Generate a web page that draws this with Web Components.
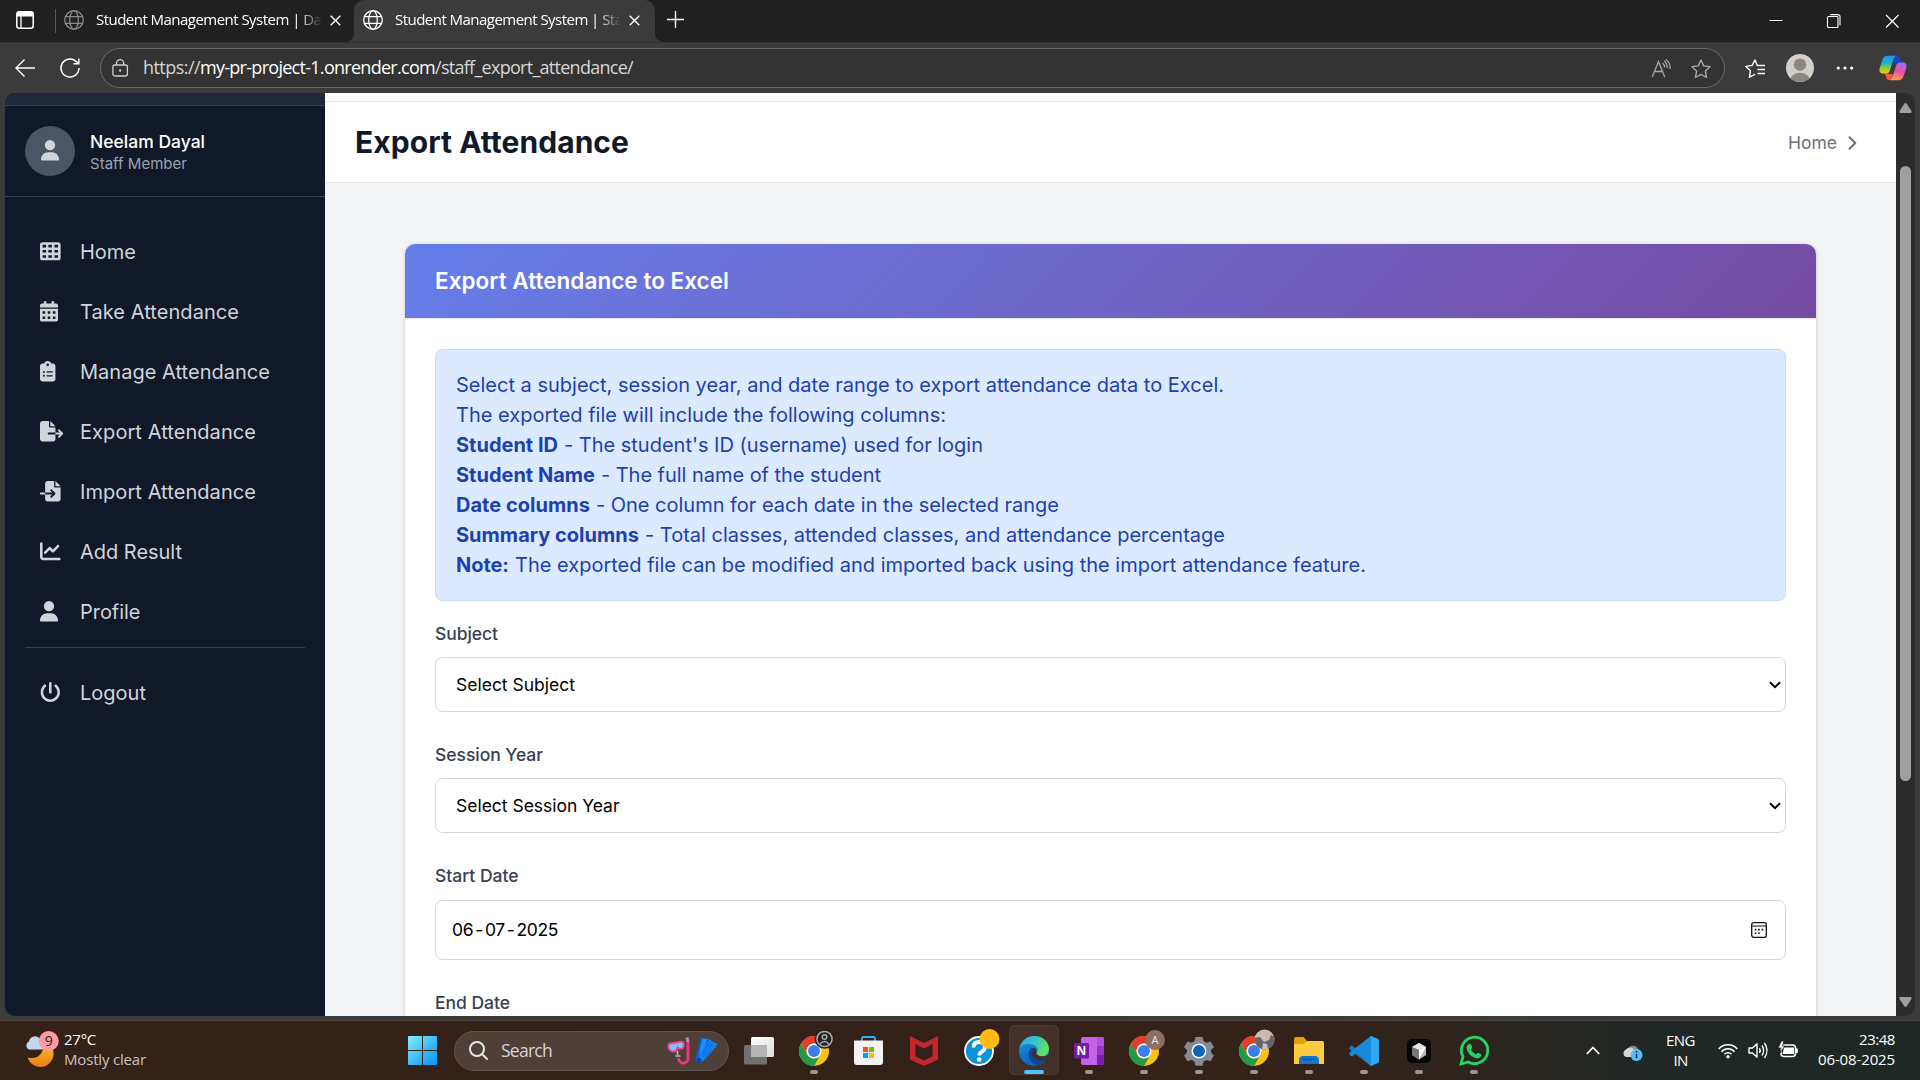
<!DOCTYPE html>
<html lang="en">
<head>
<meta charset="utf-8">
<title>Student Management System | Staff</title>
<style>
html,body{margin:0;height:100%;overflow:hidden;background:#3b3b3b}
desktop-screen{font-family:Inter,"Liberation Sans",sans-serif}
</style>
</head>
<body>
<desktop-screen></desktop-screen>
<script>
function define(name, css, html, setup) {
  const t = document.createElement('template');
  t.innerHTML = `<style>*{box-sizing:border-box}svg{display:block;overflow:visible}${css}</style>${html}`;
  customElements.define(name, class extends HTMLElement {
    constructor() {
      super();
      this.attachShadow({ mode: 'open' }).append(t.content.cloneNode(true));
    }
    connectedCallback() { if (setup) setup(this, this.shadowRoot); }
  });
}
const UI = '"Open Sans","Noto Sans",sans-serif';

/* Text run whose tracking is adjusted to a given advance width. */
define('fit-text', ':host{display:block;white-space:nowrap}span{display:inline-block}', '<span><slot></slot></span>', (el, root) => {
  const s = root.querySelector('span');
  const w = parseFloat(el.getAttribute('w'));
  const n = el.textContent.length;
  const now = s.getBoundingClientRect().width;
  if (now && w) { s.style.letterSpacing = ((w - now) / n) + 'px'; el.style.width = w + 'px'; }
});

/* ---------- glyph icons of the site ---------- */
const squares = (xs, ys, s, h = s) => ys.map(y => xs.map(x => `M${x} ${y}h${s}v${h}h-${s}z`).join('')).join('');
const GLYPHS = {
  table: [512, 'M64 32H448a64 64 0 0 1 64 64V416a64 64 0 0 1-64 64H64a64 64 0 0 1-64-64V96A64 64 0 0 1 64 32z' + squares([64, 208, 360], [96, 224, 352], 88, 64)],
  calendar: [448, 'M128 0c17.7 0 32 14.3 32 32V64H288V32c0-17.7 14.3-32 32-32s32 14.3 32 32V64h48c26.5 0 48 21.5 48 48v48H0V112C0 85.5 21.5 64 48 64H96V32c0-17.7 14.3-32 32-32zM0 192H448V464c0 26.5-21.5 48-48 48H48c-26.5 0-48-21.5-48-48V192z' + squares([64, 192, 320], [256, 384], 64)],
  clipboard: [384, 'M192 0c-41.8 0-77.4 26.7-90.5 64H64C28.7 64 0 92.7 0 128V448c0 35.3 28.7 64 64 64H320c35.3 0 64-28.7 64-64V128c0-35.3-28.7-64-64-64H282.5C269.4 26.7 233.8 0 192 0zm0 64a32 32 0 1 1 0 64 32 32 0 1 1 0-64zM72 272a24 24 0 1 1 48 0 24 24 0 1 1 -48 0zm104-16H304c8.800 0 16 7.200 16 16s-7.200 16-16 16H176c-8.800 0-16-7.200-16-16s7.200-16 16-16zM72 368a24 24 0 1 1 48 0 24 24 0 1 1 -48 0zm88 0c0-8.800 7.200-16 16-16H304c8.800 0 16 7.200 16 16s-7.200 16-16 16H176c-8.800 0-16-7.200-16-16z'],
  export: [576, 'M0 64C0 28.7 28.7 0 64 0H224V128c0 17.7 14.3 32 32 32H384V288H216c-13.3 0-24 10.7-24 24s10.7 24 24 24H384V448c0 35.3-28.7 64-64 64H64c-35.3 0-64-28.7-64-64V64zM384 336V288H494.1l-39-39c-9.4-9.4-9.4-24.6 0-33.9s24.6-9.4 33.9 0l80 80c9.4 9.4 9.4 24.6 0 33.9l-80 80c-9.4 9.4-24.6 9.4-33.9 0s-9.4-24.6 0-33.9l39-39H384zm0-208H256V0L384 128z'],
  import: [512, 'M128 64c0-35.3 28.7-64 64-64H352V128c0 17.7 14.3 32 32 32H512V448c0 35.3-28.7 64-64 64H192c-35.3 0-64-28.7-64-64V336H302.1l-39 39c-9.4 9.4-9.4 24.6 0 33.9s24.6 9.4 33.9 0l80-80c9.4-9.4 9.4-24.6 0-33.9l-80-80c-9.4-9.4-24.6-9.4-33.9 0s-9.4 24.6 0 33.9l39 39H128V64zm0 224v48H24c-13.3 0-24-10.7-24-24s10.7-24 24-24H128zM512 128H384V0L512 128z'],
  chart: [512, 'M64 64c0-17.7-14.3-32-32-32S0 46.3 0 64V400c0 44.2 35.8 80 80 80H480c17.7 0 32-14.3 32-32s-14.3-32-32-32H80c-8.8 0-16-7.2-16-16V64zm406.6 86.6c12.5-12.5 12.5-32.8 0-45.3s-32.8-12.5-45.3 0L320 210.7l-57.4-57.4c-12.5-12.5-32.8-12.5-45.3 0l-112 112c-12.5 12.5-12.5 32.8 0 45.3s32.8 12.5 45.3 0L240 221.3l57.4 57.4c12.5 12.5 32.8 12.5 45.3 0l128-128z'],
  user: [448, 'M224 256A128 128 0 1 0 224 0a128 128 0 1 0 0 256zm-45.7 48C79.8 304 0 383.8 0 482.3C0 498.7 13.3 512 29.7 512H418.3c16.4 0 29.7-13.3 29.7-29.7C448 383.8 368.2 304 269.7 304H178.3z'],
  power: [512, 'M288 32c0-17.7-14.3-32-32-32s-32 14.3-32 32V256c0 17.7 14.3 32 32 32s32-14.3 32-32V32zM143.5 120.6c13.6-11.3 15.4-31.5 4.1-45.1s-31.5-15.4-45.1-4.1C49.7 115.4 16 181.8 16 256c0 132.5 107.5 240 240 240s240-107.5 240-240c0-74.2-33.8-140.6-86.6-184.6c-13.6-11.3-33.8-9.4-45.1 4.1s-9.4 33.8 4.1 45.1c38.9 32.3 63.5 81 63.5 135.4c0 97.2-78.8 176-176 176s-176-78.8-176-176c0-54.4 24.7-103.1 63.5-135.4z']
};
define('glyph-icon', ':host{display:block}', '<svg height="20.6" fill="currentColor"><path fill-rule="evenodd"/></svg>', (el, root) => {
  const [w, d] = GLYPHS[el.getAttribute('name')];
  const svg = root.querySelector('svg');
  svg.setAttribute('viewBox', `0 0 ${w} 512`);
  svg.setAttribute('width', w / 512 * 20.6);
  root.querySelector('path').setAttribute('d', d);
});

/* ---------- browser chrome ---------- */
const GLOBE = '<svg width="20" height="20" viewBox="0 0 20 20" fill="none" stroke="currentColor" stroke-width="1.3"><circle cx="10" cy="10" r="9.3"/><ellipse cx="10" cy="10" rx="4.3" ry="9.3"/><path d="M1.5 6.7h17M1.5 13.3h17"/></svg>';
define('browser-tab', `:host{display:flex;align-items:center;height:42px;padding:0 0 2px;color:#fff;font:15px/20px ${UI}}
.g{width:20px;margin-right:12px;color:var(--globe,#fff)}
.t{width:225px;margin-top:-2px;overflow:hidden;-webkit-mask:linear-gradient(90deg,#000 202px,transparent 226px);mask:linear-gradient(90deg,#000 202px,transparent 226px)}
.x{margin-left:9px}`,
`<div class="g">${GLOBE}</div><div class="t"><slot></slot></div><svg class="x" width="11" height="11" viewBox="0 0 11 11" stroke="#fff" stroke-width="1.4"><path d="M.7.7l9.6 9.6M10.3.7L.7 10.3"/></svg>`);

define('tab-strip', `:host{display:flex;height:42px;background:#202020;align-items:stretch}
.menu{width:55px;padding:11px 0 0 16px}.sep{width:1px;height:24px;margin:9px 8px 0 0;background:#5a5a5a}
browser-tab.a{--globe:#8a8a8a;width:290px}
.on{width:301px;background:#3b3b3b;border-radius:10px 10px 0 0;padding-left:9px;display:flex;position:relative}
.on:before,.on:after{content:"";position:absolute;bottom:0;width:8px;height:8px}
.on:before{left:-8px;background:radial-gradient(circle at 0 0,#202020 7.5px,#3b3b3b 8px)}
.on:after{right:-8px;background:radial-gradient(circle at 100% 0,#202020 7.5px,#3b3b3b 8px)}
.plus{padding:11px 0 0 12px;flex:1}.win{display:flex;padding:14px 21.500px 0 0;gap:44px}`,
`<div class="menu"><svg width="18" height="18" viewBox="0 0 18 18"><rect x=".8" y=".8" width="16.4" height="16.4" rx="2.5" fill="none" stroke="#fff" stroke-width="1.5"/><path d="M1 3a2 2 0 0 1 2-2h12a2 2 0 0 1 2 2v2.400H1z" fill="#fff"/><path d="M5 5v12" stroke="#fff" stroke-width="1.300"/></svg></div><div class="sep"></div>
<browser-tab class="a"><fit-text w="232">Student Management System | Das</fit-text></browser-tab>
<div class="on"><browser-tab><fit-text w="232">Student Management System | Staf</fit-text></browser-tab></div>
<div class="plus"><svg width="17" height="17" viewBox="0 0 17 17" stroke="#fff" stroke-width="1.400"><path d="M8.500 0v17M0 8.500h17"/></svg></div>
<div class="win"><svg width="14" height="14" viewBox="0 0 14 14" stroke="#fff" stroke-width="1"><path d="M.5 6.500h13"/></svg><svg width="14" height="14" viewBox="0 0 14 14" fill="none" stroke="#fff" stroke-width="1.100"><rect x=".5" y="2.500" width="10.500" height="11" rx="1"/><path d="M3.200 .6H11a2 2 0 0 1 2 2v8.700"/></svg><svg width="14" height="14" viewBox="0 0 14 14" stroke="#fff" stroke-width="1.200"><path d="M1 1l12.500 12.500M13.500 1L1 13.500"/></svg></div>`);

const STAR = 'M10 1l2.750 5.900 6.300.800-4.650 4.400 1.200 6.400L10 15.400 4.400 18.500l1.200-6.400L.950 7.700l6.300-.8z';
define('address-bar', `:host{display:flex;height:51px;background:#3b3b3b;align-items:center;padding:0 13px 0 15px;border-top:1px solid #303030}
.back{width:45px}.re{width:40px}
.pill{width:1625px;height:40px;border:1px solid #6c6c6c;border-radius:20px;background:#333;display:flex;align-items:center;padding:0 13px 0 11px}
.lock{width:31px}.url{flex:1;display:flex;font:18px/24px ${UI};color:#d6d6d6;margin-top:-2px}.url b{font-weight:400;color:#fff}
.ra{margin-right:20px}.r{display:flex;align-items:center;flex:1;padding-left:20px}`,
`<svg class="back" width="45" height="20" viewBox="0 0 45 20" fill="none" stroke="#fff" stroke-width="1.400"><path d="M20 10H1M9.500 1.500L1 10l8.500 8.500"/></svg>
<svg class="re" width="40" height="20" viewBox="0 0 40 20" fill="none" stroke="#fff" stroke-width="1.500"><path d="M19 10a9 9 0 1 1-3.200-6.900L18.500 5.500M18.800 .5v5.300H13.500"/></svg>
<div class="pill"><svg class="lock" width="31" height="18" viewBox="0 0 31 18" fill="none" stroke="#d0d0d0" stroke-width="1.300"><rect x=".9" y="6" width="14.500" height="11" rx="2"/><path d="M4.500 6V4.200a3.600 3.600 0 0 1 7.200 0V6"/><circle cx="8.100" cy="11.500" r=".6"/></svg>
<div class="url"><fit-text w="57">https://</fit-text><b><fit-text w="235">my-pr-project-1.onrender.com</fit-text></b><fit-text w="198">/staff_export_attendance/</fit-text></div>
<svg class="ra" width="20" height="19" viewBox="0 0 20 19" fill="none" stroke="#a8a8a8" stroke-width="1.300"><path d="M1.300 18L7.500 2.500 13.700 18M3.500 12.500h8M11.500 4a5 5 0 0 1 2 4.500M13 1.800a7.500 7.500 0 0 1 3 7.200M14.800.5a9.500 9.500 0 0 1 4.200 9.500"/></svg>
<svg width="20" height="19" viewBox="0 0 20 19" fill="none" stroke="#a8a8a8" stroke-width="1.400" stroke-linejoin="round"><path d="${STAR}"/></svg></div>
<div class="r"><svg width="20" height="19" viewBox="0 0 20 19" fill="none" stroke="#fff" stroke-width="1.400" stroke-linejoin="round"><path d="M13.500 6.500H12.300L10 1 7.200 6.400.9 7.400l4.500 4.400-1 6.400 5.600-2.900M12.500 6.500h7.500M12.500 10.500h7.500M12.500 14.500h7.500" /></svg>
<svg style="margin-left:21px" width="28" height="28" viewBox="0 0 28 28"><defs><clipPath id="c"><circle cx="14" cy="14" r="14"/></clipPath></defs><circle cx="14" cy="14" r="14" fill="#d2cfcb"/><circle cx="14" cy="10.700" r="6.200" fill="#8c8783"/><ellipse cx="14" cy="26.500" rx="10" ry="7.700" fill="#8c8783" clip-path="url(#c)"/></svg>
<svg style="margin-left:22px" width="18" height="4" viewBox="0 0 18 4" fill="#fff"><circle cx="2.300" cy="2" r="1.600"/><circle cx="9" cy="2" r="1.600"/><circle cx="15.700" cy="2" r="1.600"/></svg>
<svg style="margin-left:25px" width="28" height="26" viewBox="0 0 28 26"><defs><linearGradient id="a" x2="0" y2="1"><stop stop-color="#1a9cf0"/><stop offset=".4" stop-color="#22b0c8"/><stop offset=".7" stop-color="#8ecb3e"/><stop offset="1" stop-color="#ffc60a"/></linearGradient><linearGradient id="b" x1=".6" x2=".3" y2="1"><stop stop-color="#a06bf5"/><stop offset=".5" stop-color="#f0509a"/><stop offset="1" stop-color="#ffa352"/></linearGradient></defs>
<path d="M14 1h4.500c2 0 2.300 1.500 2.800 3.300.4 1.700 1 2.700 3 2.700l-6 1.500-4.500-1z" fill="#1546c8"/><path d="M8 18.500l6 1-1.200 5.500H10c-2 0-2.500-1.500-3-3.300C6.600 20 6 18.500 4 18.500z" fill="#fa5a3c"/>
<path d="M8.500.8H18c-2.200 0-3.200 2-3.800 4l-3 9.700c-.7 2.400-1.700 4-4.500 4H4C.8 18.500 0 16 .7 13L3.500 4.700C4.400 2 6 .8 8.500.8z" fill="url(#a)"/><path d="M19.500 25.200H10c2.200 0 3.200-2 3.800-4l3-9.700c.7-2.400 1.700-4 4.500-4H24c3.200 0 4 2.500 3.300 5.500l-2.800 8.300c-.9 2.700-2.500 3.900-5 3.900z" fill="url(#b)"/></svg></div>`);

/* ---------- site ---------- */
define('side-bar', `:host{display:block;width:320px;background:#111827;border-radius:10px 0 0 10px;overflow:hidden}
.top{height:13px;background:#1f2937;border-bottom:1px solid #374151}
.who{height:91px;border-bottom:1px solid #374151;display:flex;align-items:center;padding-left:20px;gap:15px}
.who>div:last-child{padding-top:2px}
.av{width:50px;height:50px;border-radius:50%;background:#4b5563;color:#d1d5db;display:flex;align-items:center;justify-content:center}
.av glyph-icon{margin-top:-1px}
.n{color:#fff;font-weight:500;font-size:17.500px;line-height:24px}.s{color:#9ca3af;font-size:15px;line-height:20px}
nav{padding-top:25px}hr{border:0;height:1px;background:#374151;margin:5px 20px 15px}
.row{display:flex;align-items:center;height:60px;padding-left:35px;color:#d1d5db;font-size:20px}.row glyph-icon{width:40px;margin-top:-1px}`,
`<div class="top"></div><div class="who"><div class="av"><glyph-icon name="user"></glyph-icon></div><div><fit-text class="n" w="115">Neelam Dayal</fit-text><fit-text class="s" w="97">Staff Member</fit-text></div></div>
<nav><div class="row"><glyph-icon name="table"></glyph-icon><fit-text w="56">Home</fit-text></div>
<div class="row"><glyph-icon name="calendar"></glyph-icon><fit-text w="159">Take Attendance</fit-text></div>
<div class="row"><glyph-icon name="clipboard"></glyph-icon><fit-text w="190">Manage Attendance</fit-text></div>
<div class="row"><glyph-icon name="export"></glyph-icon><fit-text w="176">Export Attendance</fit-text></div>
<div class="row"><glyph-icon name="import"></glyph-icon><fit-text w="176">Import Attendance</fit-text></div>
<div class="row"><glyph-icon name="chart"></glyph-icon><fit-text w="102">Add Result</fit-text></div>
<div class="row"><glyph-icon name="user"></glyph-icon><fit-text w="60.500">Profile</fit-text></div><hr>
<div class="row"><glyph-icon name="power"></glyph-icon><fit-text w="66">Logout</fit-text></div></nav>`);

define('page-header', `:host{display:block;background:#fff;height:90px;border-bottom:1px solid #e5e7eb}
.l{height:9px;border-bottom:1px solid #e5e7eb}.b{height:80px;display:flex;align-items:center;justify-content:space-between;padding:0 39px 0 30px}
.t{font-size:30px;font-weight:650;color:#111827;line-height:40px}.c{display:flex;align-items:center;color:#6b7280;font-size:17.500px;gap:11px;padding-top:1px}`,
`<div class="l"></div><div class="b"><fit-text class="t" w="274">Export Attendance</fit-text><div class="c"><fit-text w="49">Home</fit-text><svg width="9" height="14" viewBox="0 0 9 14" fill="none" stroke="#6b7280" stroke-width="2" stroke-linecap="round" stroke-linejoin="round"><path d="M1.500 1.200L7.300 7l-5.800 5.800"/></svg></div></div>`);

define('form-field', `:host{display:block}.lab{font-size:17.500px;font-weight:450;color:#374151;line-height:25px}
.box{margin-top:11px;height:55px;border:1px solid #d1d5db;border-radius:7.500px;display:flex;align-items:center;justify-content:space-between;padding:0 4px 0 20px;font-size:17.500px;color:#000}
:host([date]) .box{height:60px;margin-top:12px;padding:0 18px 0 16px}
.cal{display:none}:host([date]) .cal{display:block}:host([date]) .arr{display:none}`,
`<div class="lab"><slot name="label"></slot></div><div class="box"><slot></slot><svg class="arr" width="12" height="8" viewBox="0 0 12 8" fill="none" stroke="#000" stroke-width="2"><path d="M1 1.200l5 5 5-5"/></svg>
<svg class="cal" width="16" height="16" viewBox="0 0 16 16"><rect x=".7" y=".7" width="14.600" height="14.600" rx="2" fill="none" stroke="#111" stroke-width="1.300"/><path d="M1 4h14" stroke="#111" stroke-width="1"/><path d="M3.700 6.800h1.700v1.700H3.700zM7.100 6.800h1.700v1.700H7.100zM10.600 6.800h1.700v1.700h-1.700zM3.700 10.400h1.700v1.700H3.700zM7.100 10.400h1.700v1.700H7.100z" fill="#111"/></svg></div>`);

define('info-note', `:host{display:block;background:#dbeafe;border:1px solid #bfdbfe;border-radius:7.500px;padding:20px;color:#1e40af;font-size:20px;line-height:30px;height:252px}div{display:flex;gap:6px;height:30px}b{font-weight:650}`,
`<fit-text w="768">Select a subject, session year, and date range to export attendance data to Excel.</fit-text>
<fit-text w="490">The exported file will include the following columns:</fit-text>
<div><b><fit-text w="102">Student ID</fit-text></b><fit-text w="419">- The student's ID (username) used for login</fit-text></div>
<div><b><fit-text w="139">Student Name</fit-text></b><fit-text w="280">- The full name of the student</fit-text></div>
<div><b><fit-text w="134">Date columns</fit-text></b><fit-text w="463">- One column for each date in the selected range</fit-text></div>
<div><b><fit-text w="183">Summary columns</fit-text></b><fit-text w="580">- Total classes, attended classes, and attendance percentage</fit-text></div>
<div><b><fit-text w="53">Note:</fit-text></b><fit-text w="851">The exported file can be modified and imported back using the import attendance feature.</fit-text></div>`);

/* Date value drawn in day, month and year segments. */
define('date-value', ':host{display:flex;margin-top:-2px}span{white-space:pre;margin-right:2px;letter-spacing:-.35px}', '<span>06</span><span>-</span><span>07</span><span>-</span><span>2025</span>');

define('export-card', `:host{display:block;background:#fff;border-radius:10px 10px 0 0;box-shadow:0 1px 4px rgba(0,0,0,.18)}
.h{height:74px;border-radius:10px 10px 0 0;background:linear-gradient(135deg,#667eea,#764ba2);display:flex;align-items:center;padding:0 30px 1px;color:#fff;font-weight:600;font-size:22.500px}
.b{border-top:1px solid #e5e7eb;padding:30px;display:flex;flex-direction:column}
.f1{margin-top:20px}.f2,.f3,.f4{margin-top:30px}`,
`<div class="h"><fit-text w="294">Export Attendance to Excel</fit-text></div><div class="b"><info-note></info-note>
<form-field class="f1"><fit-text slot="label" w="63">Subject</fit-text><fit-text w="119">Select Subject</fit-text></form-field>
<form-field class="f2"><fit-text slot="label" w="108">Session Year</fit-text><fit-text w="163.500">Select Session Year</fit-text></form-field>
<form-field class="f3" date><fit-text slot="label" w="83.500">Start Date</fit-text><date-value></date-value></form-field>
<form-field class="f4" date><fit-text slot="label" w="75">End Date</fit-text><span></span></form-field></div>`);

define('scroll-bar', `:host{display:flex;flex-direction:column;align-items:center;width:19px;background:#2c2c2c;border-radius:0 10px 10px 0;padding:10px 0 9px}
i{width:11px;height:615px;background:#9f9f9f;border-radius:6px;margin:53px 0 auto}`,
`<svg width="13" height="10" viewBox="0 0 13 10" fill="#9f9f9f"><path d="M5.300.8q1.200-1.400 2.400 0L12.500 8q.8 2-1 2H1.500q-1.800 0-1-2z"/></svg><i></i><svg width="13" height="10" viewBox="0 0 13 10" fill="#9f9f9f"><path d="M5.300 9.200q1.200 1.400 2.400 0L12.500 2q.8-2-1-2H1.500Q-.3 0 .5 2z"/></svg>`);

define('web-view', `:host{display:flex;height:923px;margin:0 5px;overflow:hidden}
main{flex:1;background:#f3f4f6;overflow:hidden}export-card{margin:61px 80px 0}`,
`<side-bar></side-bar><main><page-header></page-header><export-card></export-card></main><scroll-bar></scroll-bar>`);

/* ---------- taskbar ---------- */
const chrome = `<svg width="30" height="30" viewBox="0 0 30 30"><circle cx="15" cy="15" r="15" fill="#fbc116"/><path d="M2 7.500A15 15 0 0 1 28 7.500H15a7.500 7.500 0 0 0-6.500 11.250z" fill="#e33b2e"/><path d="M2 7.500A15 15 0 0 0 15 30l6.500-11.250a7.500 7.500 0 0 1-13 0z" fill="#229a4b"/><circle cx="15" cy="15" r="7.500" fill="#fff"/><circle cx="15" cy="15" r="6" fill="#3b7ded"/></svg>`;
define('task-icon', `:host{display:flex;width:55px;height:59px;flex:none;align-items:center;justify-content:center;position:relative}
:host([on]) .bg{position:absolute;left:3px;top:4px;width:50px;height:50px;border-radius:5px;background:#423029;border:1px solid #4b3a33}
.i{position:relative;display:flex;width:30px;height:30px;align-items:center;justify-content:center}
u{display:none;position:absolute;bottom:6px;left:23.500px;width:8px;height:4px;border-radius:2px;background:#9f9691}
:host([run]) u{display:block}:host([on]) u{display:block;left:18px;width:20px;background:#4cc2ff}
::slotted([slot=badge]){position:absolute;left:28px;top:8px}`,
`<div class="bg"></div><div class="i"><slot></slot></div><slot name="badge"></slot><u></u>`);

define('search-box', `:host{display:flex;width:275px;height:40px;margin:0 2px 0 4px;border-radius:20px;background:#4e3f38;border:1px solid #64554f;align-items:center;padding:0 10px 0 14px;color:#d8d4d2;font:17.500px/24px ${UI}}
fit-text{margin:-2px 0 0 13px;flex:1}.f{margin-left:4px}`,
`<svg width="19" height="19" viewBox="0 0 19 19" fill="none" stroke="#e6e6e6" stroke-width="2" stroke-linecap="round"><circle cx="8" cy="8" r="7"/><path d="M13 13l5 5"/></svg><fit-text w="51">Search</fit-text>
<svg width="24" height="27" viewBox="0 0 24 27" fill="none"><path d="M21 4v16a4.800 4.800 0 0 1-9.300 2.500" stroke="#f0337a" stroke-width="3" stroke-linecap="round"/><path d="M20 .5l.8 4.500" stroke="#a79aaa" stroke-width="3"/><path d="M3 6.500l11-1.800q2.700 0 3 2.500 0 4-2.800 4.800-2.200 0-3.700-1.500-1 4-4 4Q2.500 14.500 1.300 10.500.8 7 3 6.500z" fill="#7cc0ff" stroke="#f2407f" stroke-width="1.800"/><path d="M10.500 13.500v4.500M8.500 19h5" stroke="#b9b4c8" stroke-width="1.600"/></svg>
<svg class="f" width="23" height="27" viewBox="0 0 23 27"><path d="M6 .3Q9 2 13.500 1.500L9 22q-3 4.500-7.500 3-1.500-1-1-3z" fill="#0a62d8"/><path d="M7.500 1.500Q9.500 2.300 12 2.200L7 17 4 17z" fill="#1e90ff"/><path d="M14 2Q18 6 22.700 6.800 20 12 9 23q-3 3.500-6.500 1L5 17z" fill="#1583f2"/><path d="M15 5L6.500 18M17.500 6.500L8 19.500M20 8L9.500 21" stroke="#0a5ccc" stroke-width=".8"/><circle cx="4" cy="23.300" r="2.500" fill="#0747a6"/></svg>`);

define('weather-tile', `:host{display:flex;align-items:center;width:395px;padding-left:25px;height:59px;font:15px/20px ${UI}}
svg{margin:-3px 5px 0 0}.a{color:#fff}.b{color:#c9c2be}div{margin-top:-4px}`,
`<svg width="34" height="36" viewBox="0 0 34 36"><defs><linearGradient id="m" x2="0" y2="1"><stop stop-color="#f7b52c"/><stop offset="1" stop-color="#ee7b1a"/></linearGradient></defs><path d="M28 19a12.700 12.700 0 0 1-25.300 7.500C12 29 18.500 23 18 15z" fill="url(#m)"/><path d="M4 18.500a4.300 4.300 0 0 1 0-8 6 6 0 0 1 11-2.500 5 5 0 0 1 2 10.500z" fill="#c4d5f2"/><circle cx="23.700" cy="10" r="10" fill="#ff99a4"/><text x="23.700" y="15" font-size="14" text-anchor="middle" fill="#221" font-family="Open Sans,sans-serif">9</text></svg>
<div><fit-text class="a" w="32">27°C</fit-text><fit-text class="b" w="82">Mostly clear</fit-text></div>`);

define('system-tray', `:host{display:flex;align-items:center;margin-left:auto;padding-right:24px;height:59px;color:#fff;font:15px/20px ${UI}}
.c{text-align:center;width:29px;display:flex;flex-direction:column;align-items:center;margin-top:-2px}.d{display:flex;flex-direction:column;align-items:flex-end;width:77px;margin-top:-4px}.d fit-text{margin-right:1px}`,
`<svg width="14" height="9" viewBox="0 0 14 9" fill="none" stroke="#fff" stroke-width="1.800"><path d="M.8 8L7 1.500 13.200 8"/></svg>
<svg style="margin:4px 23px 0 22px" width="21" height="17" viewBox="0 0 21 17"><path d="M6 5a5.500 5.500 0 0 1 10 0v8H8z" fill="#8b8b8b"/><path d="M4 13a4 4 0 0 1 0-7.500 5 5 0 0 1 8 0V13z" fill="#d6d6d6"/><circle cx="14.500" cy="11" r="6" fill="#4cc2ff"/><path d="M14.500 7v1.500M14.500 9.800v4.500" stroke="#123" stroke-width="1.500"/></svg>
<div class="c"><fit-text w="29">ENG</fit-text><fit-text w="14">IN</fit-text></div>
<svg style="margin-left:23px" width="20" height="16" viewBox="0 0 20 16" fill="none" stroke="#fff" stroke-width="1.500"><path d="M.7 6a12.500 12.500 0 0 1 18.600 0M3.500 8.700a8.800 8.800 0 0 1 13 0M6.300 11.300a5 5 0 0 1 7.400 0"/><circle cx="10" cy="13.800" r="1.300" fill="#fff" stroke-width=".8"/></svg>
<svg style="margin-left:10px" width="20" height="17" viewBox="0 0 20 17" fill="none" stroke="#fff" stroke-width="1.400" stroke-linejoin="round"><path d="M1 6h3.500L9 1.800v13.400L4.500 11H1zM11.500 6q1.500 2.500 0 5M14 3.500q3.200 5 0 10M16.500 1q5 7.500 0 15"/></svg>
<svg style="margin:-3px 20px 0 10px" width="21" height="17" viewBox="0 0 21 17"><rect x="3" y="4" width="14.500" height="11.500" rx="3" fill="none" stroke="#fff" stroke-width="1.500"/><path d="M6 6.500h10v6.500H4.500z" fill="#fff"/><path d="M18 7.500h1.800v4.500H18z" fill="#fff"/><path d="M3.500 0L0 7h3l-1 5 5-7H4.500L6 0z" fill="#fff" stroke="#1f2726" stroke-width=".8"/></svg>
<div class="d"><fit-text w="36">23:48</fit-text><fit-text w="77">06-08-2025</fit-text></div>`);

define('task-bar', `:host{display:flex;align-items:center;height:60px;border-top:1px solid #48423f;background:linear-gradient(90deg,#342218 0,#33211a 68%,#2b251e 78%,#202725 86%,#1f2826 100%)}
.a{font:11px/20px "Open Sans",sans-serif;width:20px;height:20px;margin:1px 0 0 1px;border-radius:50%;background:#8d6e63;color:#eee;text-align:center}`,
`<weather-tile></weather-tile>
<task-icon><svg width="29" height="29" viewBox="0 0 29 29"><defs><linearGradient id="w" x2="1" y2="1"><stop stop-color="#7deefd"/><stop offset="1" stop-color="#0b90f5"/></linearGradient></defs><path d="M1 0h13v14H0V1q0-1 1-1zM15 0h13q1 0 1 1v13H15zM0 15h14v14H1q-1 0-1-1zM15 15h14v13q0 1-1 1H15z" fill="url(#w)"/></svg></task-icon>
<search-box></search-box>
<task-icon><svg width="30" height="28" viewBox="0 0 30 28"><defs><linearGradient id="v" x2="1" y2="1"><stop stop-color="#fff"/><stop offset="1" stop-color="#dcdcdc"/></linearGradient></defs><rect x="7" width="23" height="20" rx="1.500" fill="url(#v)"/><rect y="8" width="23" height="19.500" rx="1.500" fill="#707070"/><rect x="7" y="8" width="16" height="12" fill="#b5b5b5"/></svg></task-icon>
<task-icon run>${chrome}<svg slot="badge" width="20" height="20" viewBox="0 0 20 20" fill="none" stroke="#a8a8a8" stroke-width="1.500"><circle cx="10.500" cy="10" r="9.800" fill="#222" stroke="none"/><circle cx="10.500" cy="10" r="7.600"/><circle cx="10.500" cy="8" r="2.300"/><path d="M6 15q4.500-5 9 0"/></svg></task-icon>
<task-icon><svg width="29" height="29" viewBox="0 0 29 29"><path d="M8 6V2.500Q8 1 9.500 1h10Q21 1 21 2.500V6" fill="none" stroke="#29b6f0" stroke-width="1.800"/><path d="M0 4.500h29V26q0 3-3 3H3q-3 0-3-3z" fill="#f2f2f2"/><path d="M9 11h5v5H9z" fill="#f25022"/><path d="M15 11h5v5h-5z" fill="#7fba00"/><path d="M9 17h5v5H9z" fill="#00a4ef"/><path d="M15 17h5v5h-5z" fill="#ffb900"/></svg></task-icon>
<task-icon><svg width="28" height="30" viewBox="0 0 28 30"><path d="M0 0l14 7L28 0v23.500L14 30 0 23.500zM5.500 8v12.500L14 24.500l8.500-4V8L14 12.500z" fill="#c4262e" fill-rule="evenodd"/></svg></task-icon>
<task-icon><svg width="30" height="30" viewBox="0 0 30 30" fill="none"><circle cx="15" cy="15" r="14" fill="#0a94d8" stroke="#fff" stroke-width="1.800"/><path d="M9.500 11.500q0-5.500 5.700-5.500t5.700 5q0 3-3.300 4.800-2.300 1.300-2.300 3.700" stroke="#fff" stroke-width="3.800"/><circle cx="15.200" cy="23.500" r="2.300" fill="#fff"/></svg><svg slot="badge" width="20" height="20" viewBox="0 0 20 20"><circle cx="10.500" cy="10" r="10" fill="#ffb90f"/></svg></task-icon>
<task-icon on><svg width="30" height="30" viewBox="0 0 30 30"><defs><linearGradient id="e1" x2="1" y2=".4"><stop stop-color="#2ba6e8"/><stop offset=".55" stop-color="#36c5c4"/><stop offset="1" stop-color="#66e05e"/></linearGradient><linearGradient id="e2" x2=".4" y2="1"><stop stop-color="#1a93e0"/><stop offset="1" stop-color="#0c62c0"/></linearGradient></defs><circle cx="15" cy="15" r="15" fill="url(#e2)"/><path d="M.5 12.500C2 5 8 0 15.500 0 24 0 30 6 30 13q0 7-7.500 7.300-6 0-5.300-3.300 1.500-1 1.500-3C18.700 10 14 8 10 8 5.500 8 2 10 .5 12.500z" fill="url(#e1)"/><path d="M13 11.500Q9.500 14 9.500 18.500 10 28 20 28.500 25.500 27.500 28.200 22.600 24.500 24.500 21 23.500 14 22 14 16.500q0-1.700 1.200-3z" fill="#14468f"/><path d="M17.500 14.500q-.5-2.500-3-2.500-1.500 2-1.500 5 .5 6 7.500 8 4 .5 7.500-1.500l2.500-5q-4 2.500-8.500 1.800-6-1.300-4.500-5.800z" fill="#423029"/><path d="M13 17q.5 6 7.500 7.500 4 .5 7.500-1.500-4 6-10 6Q11 27 11 19z" fill="#14468f"/></svg></task-icon>
<task-icon run><svg width="30" height="28" viewBox="0 0 30 28"><rect x="7" width="23" height="28" rx="2" fill="#c563e8"/><path d="M23 0h5q2 0 2 2v7h-7z" fill="#b14fe0"/><path d="M23 9h7v9h-7z" fill="#9a35c8"/><path d="M23 18h7v8q0 2-2 2h-5z" fill="#7d1fae"/><rect y="6" width="15" height="15.500" rx="1.500" fill="#7719aa"/><text x="7.500" y="18" font-family="Open Sans,sans-serif" font-weight="700" font-size="12" text-anchor="middle" fill="#fff">N</text></svg></task-icon>
<task-icon run>${chrome}<div slot="badge" class="a">A</div></task-icon>
<task-icon run><svg width="30" height="30" viewBox="0 0 30 30"><path d="M11.500 1h7l1 4 3 1.700 4-1.200L30 11l-3 3v2.500l3 3-3.500 5.800-4-1.200-3 1.700-1 4h-7l-1-4-3-1.700-4 1.200L0 19.500l3-3V14l-3-3 3.500-5.500 4 1.200 3-1.700z" fill="#828a93"/><circle cx="15" cy="15" r="7.500" fill="#fff"/><circle cx="15" cy="15" r="6" fill="#0f63b8"/></svg></task-icon>
<task-icon run>${chrome}<svg slot="badge" width="21" height="21" viewBox="0 0 21 21"><defs><clipPath id="p"><circle cx="10.500" cy="10.500" r="10"/></clipPath></defs><g clip-path="url(#p)"><path d="M0 0h21v21H0z" fill="#cdb9b2"/><path d="M0 9l6-1 4 5 5-2 2-5 4 2v13H0z" fill="#63666b"/><path d="M9 14l4 1 1 6H8z" fill="#c7c2bf"/></g></svg></task-icon>
<task-icon run><svg width="30" height="27" viewBox="0 0 30 27"><path d="M0 2q0-2 2-2h7.500l3 3.500V10H0z" fill="#e0a012"/><path d="M0 7h10l3-3h15.500Q30 4 30 6v21H0z" fill="#fdcb40"/><path d="M5 27v-4q0-4 4-4h12q4 0 4 4v4z" fill="#1277cf"/><path d="M9 22.500h12" stroke="#0b4f96" stroke-width="1.400"/></svg></task-icon>
<task-icon run><svg width="30" height="30" viewBox="0 0 30 30"><path d="M22 0L8 13.500 3 9.500.5 11v2.500L22 30v-7.500z" fill="#0f7cc9"/><path d="M22 30L8 16.500l-5 4L.5 19v-2.500L22 0v7.500z" fill="#1a8ad8"/><path d="M22 0l7 3q1 .5 1 2v20q0 1.500-1 2l-7 3-1.500-1q1.500 0 1.500-2V3q0-2-1.500-2z" fill="#2aa7f5"/></svg></task-icon>
<task-icon run><svg width="24" height="24" viewBox="0 0 24 24"><rect width="24" height="24" rx="5" fill="#060606"/><path d="M12 4l7 4v8l-7 4.500L5 16V8z" fill="#b9b9b9"/><path d="M5 8l7-4 7 4-7 3z" fill="#e4e4e4"/><path d="M12 11l7-3-7 12.500z" fill="#f8f8f8"/><path d="M5 8l7 3v9.500L5 16z" fill="#777"/></svg></task-icon>
<task-icon run><svg width="30" height="30" viewBox="0 0 30 30"><path d="M2 28l2-7.200A13.200 13.200 0 1 1 9.200 26z" fill="none" stroke="#25d366" stroke-width="2.800"/><path d="M10.300 7.800c.6-.2 1.300-.1 1.600.5l1.200 2.800c.2.500 0 .9-1.300 2.500 1.300 2.500 3 3.900 5.300 4.900.7-.7 1.200-1.700 1.800-1.700.5 0 3.100 1.300 3.400 1.600.3 1.800-1.500 3.900-4 4-4.900-.1-10.600-5.700-10.600-10.600 0-1.600 1-3.300 2.600-4z" fill="#25d366"/></svg></task-icon>
<system-tray></system-tray>`);

define('desktop-screen', ':host{display:flex;flex-direction:column;height:1080px;width:1920px;background:#3b3b3b}task-bar{margin-top:auto}', '<tab-strip></tab-strip><address-bar></address-bar><web-view></web-view><task-bar></task-bar>');
</script>
</body>
</html>
